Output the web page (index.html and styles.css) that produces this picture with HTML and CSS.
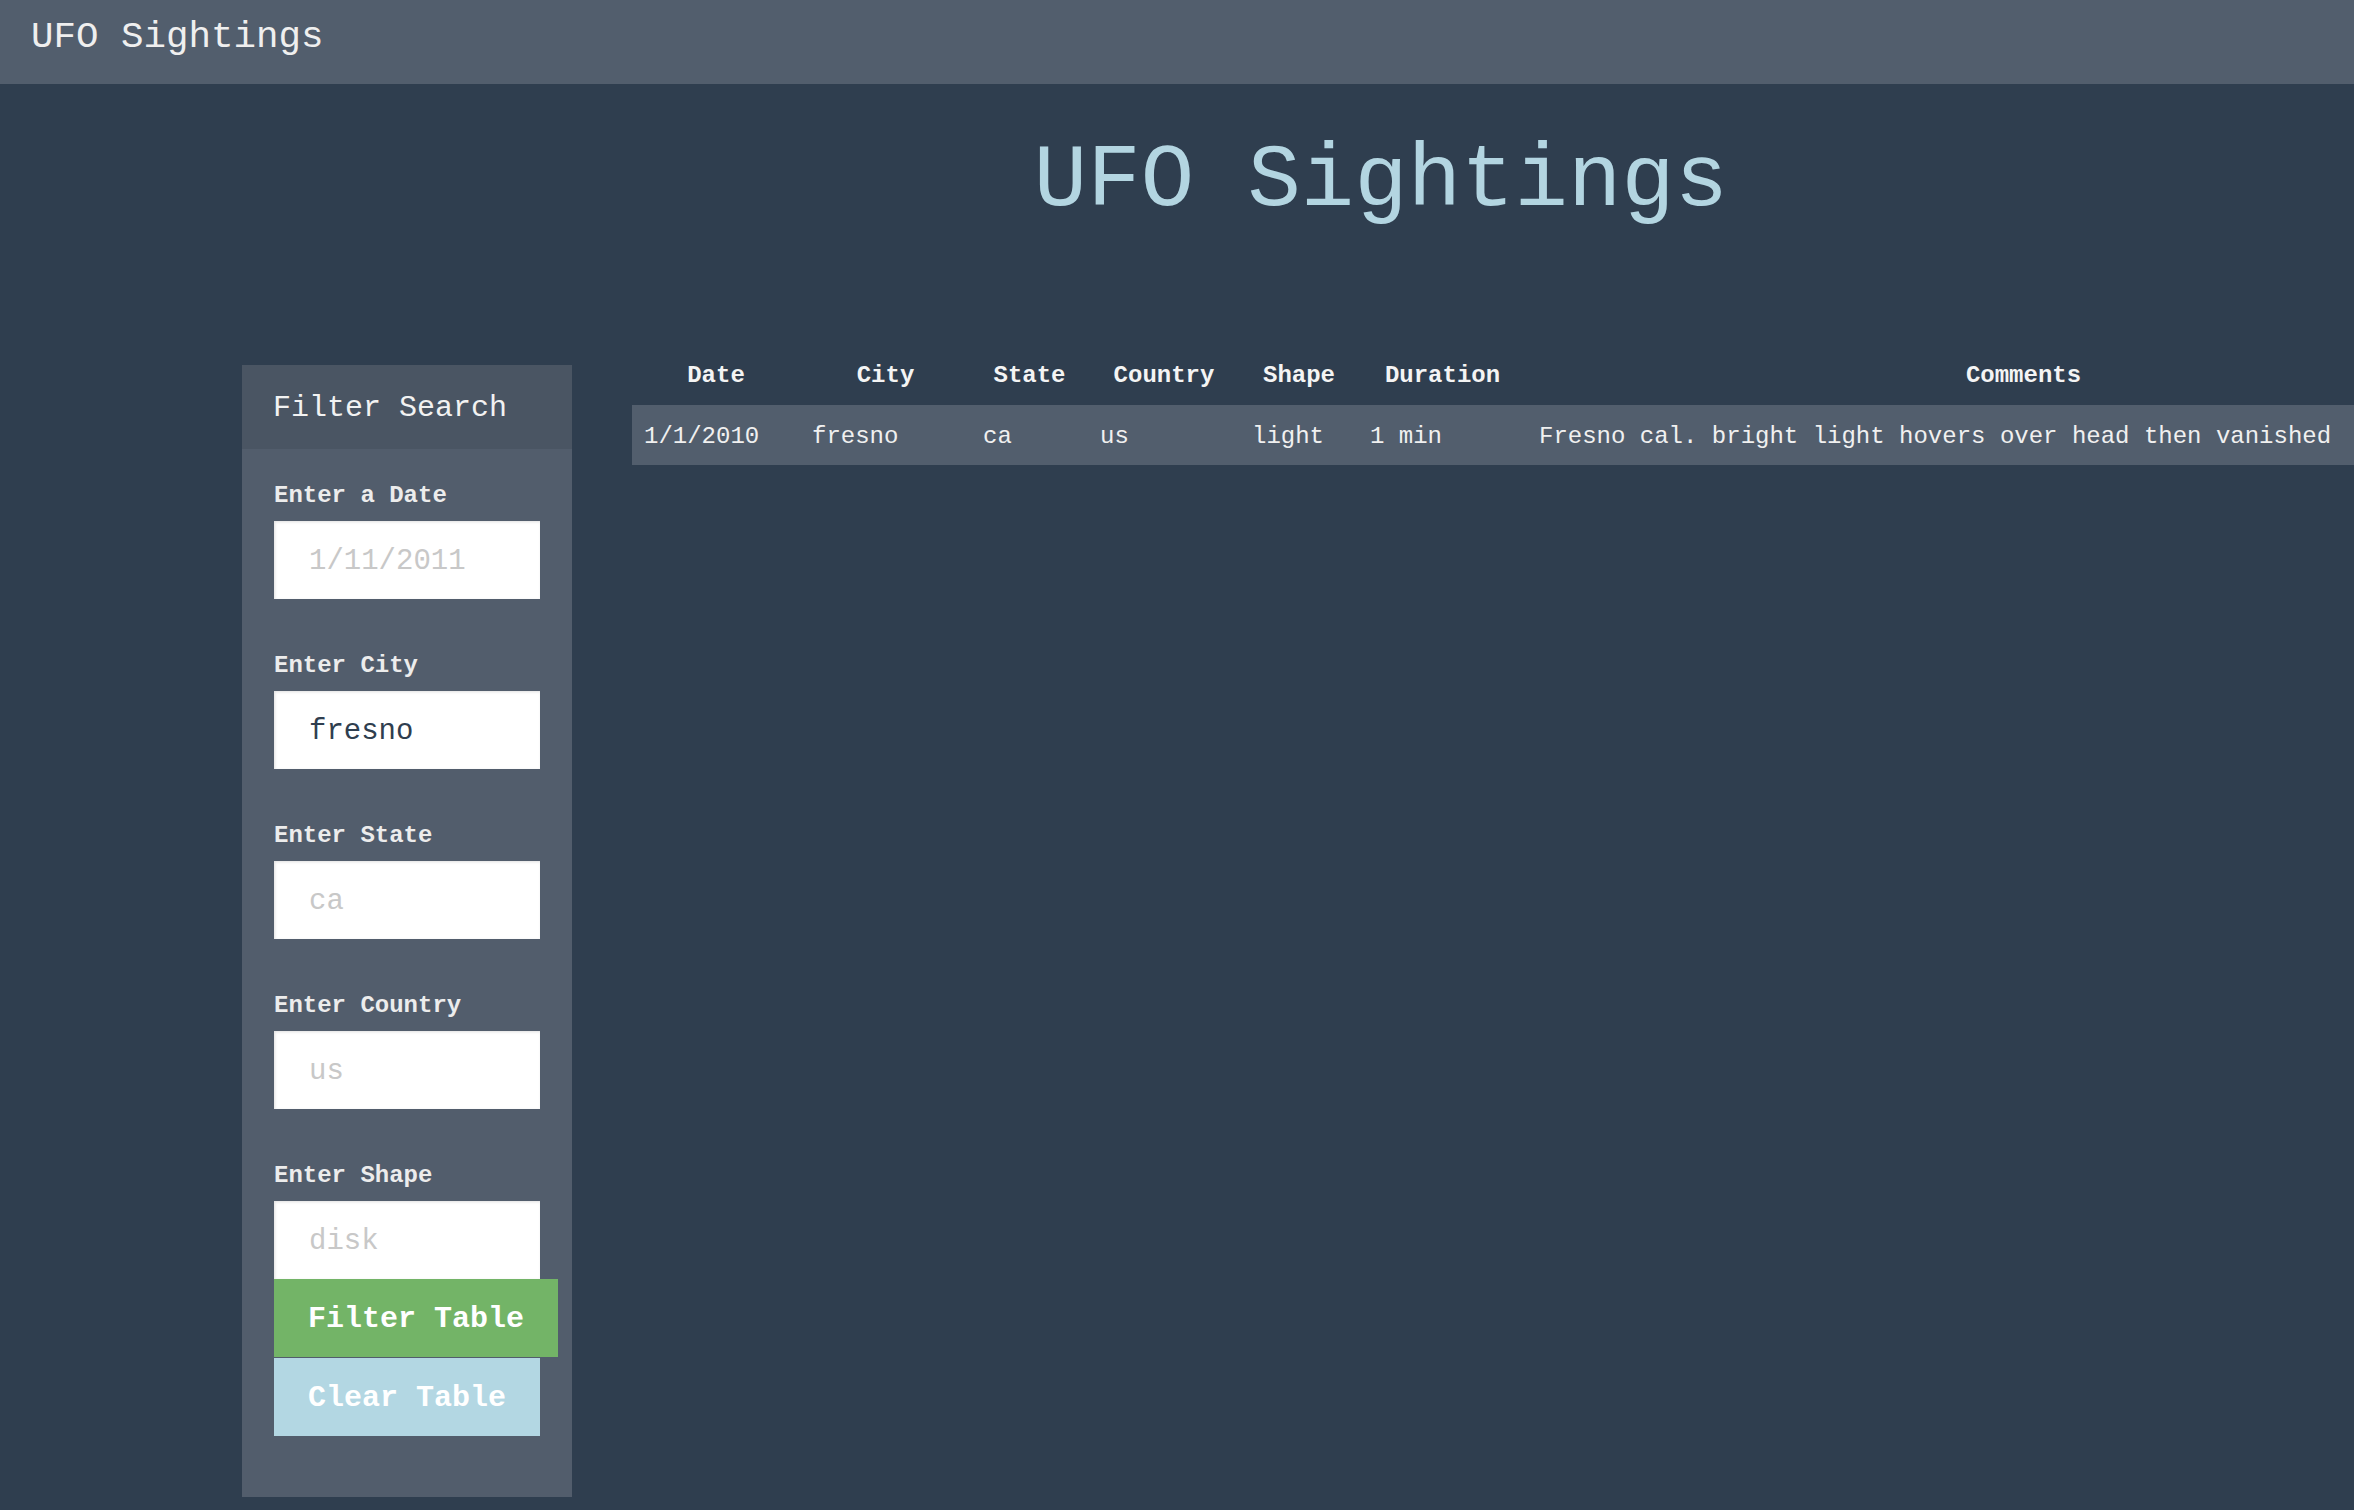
FILE: index.html
```html
<!DOCTYPE html>
<html lang="en">
<head>
<meta charset="utf-8">
<title>UFO Sightings</title>
<link rel="stylesheet" href="styles.css">
</head>
<body>
<nav class="navbar"><span class="brand">UFO Sightings</span></nav>
<div class="page">
  <h1 class="title">UFO Sightings</h1>
  <div class="content">
    <aside class="panel">
      <div class="panel-head">Filter Search</div>
      <form class="panel-body">
        <label class="field-label" for="date">Enter a Date</label>
        <input class="field" id="date" type="text" placeholder="1/11/2011">
        <label class="field-label" for="city">Enter City</label>
        <input class="field" id="city" type="text" value="fresno">
        <label class="field-label" for="state">Enter State</label>
        <input class="field" id="state" type="text" placeholder="ca">
        <label class="field-label" for="country">Enter Country</label>
        <input class="field" id="country" type="text" placeholder="us">
        <label class="field-label" for="shape">Enter Shape</label>
        <input class="field field-last" id="shape" type="text" placeholder="disk">
        <button class="btn btn-filter" type="button">Filter Table</button>
        <button class="btn btn-clear" type="button">Clear Table</button>
      </form>
    </aside>
    <div class="table-clip">
      <table class="ufo-table">
        <colgroup>
          <col class="c-date"><col class="c-city"><col class="c-state"><col class="c-country"><col class="c-shape"><col class="c-duration"><col class="c-comments">
        </colgroup>
        <thead>
          <tr><th>Date</th><th>City</th><th>State</th><th>Country</th><th>Shape</th><th>Duration</th><th>Comments</th></tr>
        </thead>
        <tbody>
          <tr><td>1/1/2010</td><td>fresno</td><td>ca</td><td>us</td><td>light</td><td>1 min</td><td>Fresno cal. bright light hovers over head then vanished</td></tr>
        </tbody>
      </table>
    </div>
  </div>
</div>
</body>
</html>
```

FILE: styles.css
```css
html, body {
  margin: 0;
  padding: 0;
  overflow: hidden;
}
body {
  background: #2f3e4f;
  font-family: "Liberation Mono", "Courier New", monospace;
  color: #f0f0f0;
  width: 2354px;
  height: 1510px;
}
.navbar {
  height: 84px;
  box-sizing: border-box;
  background: #525e6d;
  padding: 16px 0 0 31px;
}
.brand {
  font-size: 37.5px;
  line-height: normal;
  color: #efefef;
  display: block;
}
.page {
  margin-left: 242px;
  width: 2278px;
}
.title {
  margin: 47px 0 0 0;
  text-align: center;
  font-weight: normal;
  font-size: 89px;
  line-height: 101px;
  color: #b3d5e1;
}
.content {
  display: flex;
  align-items: flex-start;
  gap: 60px;
  margin-top: 133px;
}
.panel {
  width: 330px;
  flex: none;
  background: #525d6c;
}
.panel-head {
  background: #4a5563;
  height: 84px;
  box-sizing: border-box;
  padding: 26px 0 0 31px;
  font-size: 30px;
  line-height: 34px;
  color: #f2f2f2;
}
.panel-body {
  display: flex;
  flex-direction: column;
  align-items: flex-start;
  padding: 33px 32px 61px 32px;
  margin: 0;
}
.field-label {
  font-size: 24px;
  font-weight: bold;
  line-height: 27px;
  color: #ececec;
}
.field {
  margin: 12px 0 53px 0;
  width: 266px;
  height: 78px;
  box-sizing: border-box;
  border: none;
  box-shadow: inset 1px 1px 3px rgba(0, 0, 0, 0.12);
  background: #ffffff;
  padding: 3px 0 0 35px;
  font-family: "Liberation Mono", "Courier New", monospace;
  font-size: 29px;
  color: #2f3e4f;
  outline: none;
}
.field::placeholder {
  color: #c8c8c8;
}
.field-last {
  margin-bottom: 0;
}
.btn {
  flex: none;
  border: none;
  height: 78px;
  padding: 3px 34px 0 34px;
  font-family: "Liberation Mono", "Courier New", monospace;
  font-size: 30px;
  font-weight: bold;
  color: #ffffff;
  line-height: 75px;
  white-space: nowrap;
  cursor: pointer;
}
.btn-filter {
  background: #73b467;
}
.btn-clear {
  background: #b3d7e3;
  margin-top: 1px;
}
.table-clip {
  width: 1722px;
  overflow: hidden;
  flex: none;
  margin-top: -16px;
}
.ufo-table {
  border-collapse: collapse;
  table-layout: fixed;
  width: 1888px;
  font-size: 24px;
}
.c-date { width: 168px; }
.c-city { width: 171px; }
.c-state { width: 117px; }
.c-country { width: 152px; }
.c-shape { width: 118px; }
.c-duration { width: 169px; }
.c-comments { width: 993px; }
.ufo-table th {
  font-weight: bold;
  text-align: center;
  padding: 13px 0 16px 0;
  line-height: 27px;
  color: #f4f4f4;
}
.ufo-table td {
  text-align: left;
  padding: 18px 0 15px 12px;
  line-height: 27px;
  white-space: nowrap;
  color: #f0f0f0;
}
.ufo-table tbody tr {
  background: #525e6d;
}
```
